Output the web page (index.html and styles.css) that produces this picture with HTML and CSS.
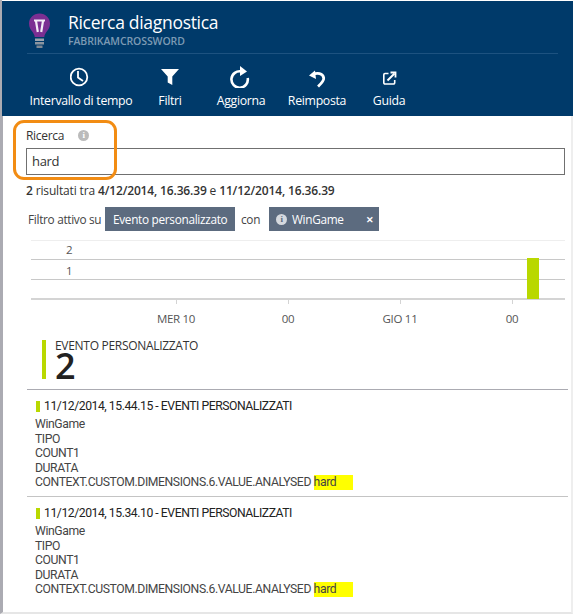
FILE: index.html
```html
<!DOCTYPE html>
<html lang="en">
<head>
  <meta charset="UTF-8">
  <meta name="viewport" content="width=device-width, initial-scale=1.0">
  <title>Ricerca diagnostica</title>
  <link rel="stylesheet" href="styles.css">
</head>
<body>
  <div class="blade">
    <div class="blade-header">
      <div class="title-row">
        <svg class="bulb" width="24" height="36" viewBox="0 0 24 36">
          <path d="M11.500 .5C5.500 .5 1 5 1 10.500c0 3.500 1.500 5.800 3 7.800 1.300 1.700 2.500 3.500 2.700 5.700h9.600c.2-2.200 1.400-4 2.700-5.700 1.500-2 3-4.300 3-7.800C22 5 17.500 .5 11.500 .5z" fill="#7b2f92"/>
          <path d="M6 7.500h11M8 8l1.800 11M15 8l-1.800 11" stroke="#f3ecf6" stroke-width="2.200" fill="none"/>
          <rect x="7" y="25.500" width="9" height="2.500" fill="#9aa3ad"/>
          <rect x="7" y="29" width="9" height="2.500" fill="#8c95a0"/>
          <rect x="8.500" y="32.500" width="6" height="2.500" fill="#7f8894"/>
        </svg>
        <div>
          <div class="blade-title">Ricerca diagnostica</div>
          <div class="blade-subtitle">FABRIKAMCROSSWORD</div>
        </div>
      </div>
      <div class="toolbar">
        <div class="tool">
          <svg width="22" height="22" viewBox="0 0 22 22" fill="none" stroke="#fff">
            <circle cx="9" cy="11" r="8.300" stroke-width="1.800"/>
            <path d="M8 5v6.500l5 3.500" stroke-width="1.800"/>
          </svg>
          <span>Intervallo di tempo</span>
        </div>
        <div class="tool">
          <svg width="22" height="22" viewBox="0 0 22 22">
            <path d="M2 3h18l-6.700 7.500V19l-4.600-2.500v-6z" fill="#fff"/>
          </svg>
          <span>Filtri</span>
        </div>
        <div class="tool">
          <svg width="22" height="22" viewBox="0 0 22 22" fill="none">
            <path d="M11.500 5.500A8.200 8.200 0 1 0 17.700 12" stroke="#fff" stroke-width="2.600"/>
            <path d="M10 0l7 5.500-7 4.500z" fill="#fff"/>
          </svg>
          <span>Aggiorna</span>
        </div>
        <div class="tool">
          <svg width="22" height="22" viewBox="0 0 22 22" fill="none">
            <path d="M7 8.500c4-2 10-1.500 10.700 3.500 .4 3-3 6-5.700 8.500" stroke="#fff" stroke-width="2.800"/>
            <path d="M9 4.500l-6 5 7 3.500z" fill="#fff"/>
          </svg>
          <span>Reimposta</span>
        </div>
        <div class="tool">
          <svg width="22" height="22" viewBox="0 0 22 22" fill="none" stroke="#fff" stroke-width="1.600">
            <path d="M10.500 7.500H7A1.200 1.200 0 0 0 5.800 8.700v8.100A1.200 1.200 0 0 0 7 18h8.500a1.200 1.200 0 0 0 1.200-1.200V14"/>
            <path d="M9.500 14.500l7-7" stroke-width="2"/>
            <path d="M12.500 6.500h5v5" stroke-width="1.800"/>
          </svg>
          <span>Guida</span>
        </div>
      </div>
    </div>

    <div class="search">
      <div class="search-label">Ricerca <span class="info info-light">i</span></div>
      <div class="search-input">hard</div>
      <div class="search-callout"></div>
    </div>

    <p class="summary"><b>2</b> risultati tra <b>4/12/2014, 16.36.39</b> e <b>11/12/2014, 16.36.39</b></p>

    <div class="filters">
      <span>Filtro attivo su</span>
      <span class="chip chip-type">Evento personalizzato</span>
      <span class="filter-con">con</span>
      <span class="chip chip-name"><span class="info info-chip">i</span> WinGame <span class="chip-close">&#10005;</span></span>
    </div>

    <div class="chart">
      <div class="chart-row"><span>2</span></div>
      <div class="chart-row"><span>1</span></div>
      <div class="chart-row"></div>
      <div class="chart-bar"></div>
      <div class="chart-axis">
        <span>MER 10</span>
        <span>00</span>
        <span>GIO 11</span>
        <span>00</span>
      </div>
    </div>

    <div class="total">
      <div class="total-mark"></div>
      <div>
        <div class="total-label">EVENTO PERSONALIZZATO</div>
        <div class="total-value">2</div>
      </div>
    </div>

    <div class="result">
      <div class="result-title"><i class="result-mark"></i>11/12/2014, 15.44.15 - EVENTI PERSONALIZZATI</div>
      <div class="result-line">WinGame</div>
      <div class="result-line">TIPO</div>
      <div class="result-line">COUNT1</div>
      <div class="result-line">DURATA</div>
      <div class="result-line">CONTEXT.CUSTOM.DIMENSIONS.6.VALUE.ANALYSED <mark>hard</mark></div>
    </div>
    <div class="result">
      <div class="result-title"><i class="result-mark"></i>11/12/2014, 15.34.10 - EVENTI PERSONALIZZATI</div>
      <div class="result-line">WinGame</div>
      <div class="result-line">TIPO</div>
      <div class="result-line">COUNT1</div>
      <div class="result-line">DURATA</div>
      <div class="result-line">CONTEXT.CUSTOM.DIMENSIONS.6.VALUE.ANALYSED <mark>hard</mark></div>
    </div>
  </div>
</body>
</html>
```

FILE: styles.css
```css
html, body {
  margin: 0;
  padding: 0;
  background-color: #fff;
}
body {
  font-family: "Open Sans", Roboto, sans-serif;
  font-size: 12px;
  letter-spacing: -0.3px;
  color: #444;
}
.blade {
  box-sizing: border-box;
  width: 573px;
  height: 614px;
  border-left: 3px solid #ababb2;
  border-right: 2px solid #eee;
  border-bottom: 2px solid #e6e6e6;
}
.blade-header {
  height: 115px;
  margin: 0 -2px 0 -1px;
  border-top: 1px solid #fff;
  background-color: #003a6a;
  background-clip: padding-box;
  color: white;
}
.title-row {
  display: flex;
  gap: 16px;
  height: 53px;
  margin: 0 15px 0 25px;
  box-sizing: border-box;
  padding: 12px 0 0 1px;
  border-bottom: 1px solid #1d5280;
}
.bulb {
  flex: none;
}
.blade-title {
  font-size: 17.500px;
  line-height: 21px;
  margin-top: -1px;
}
.blade-subtitle {
  font-size: 10.500px;
  font-weight: 600;
  line-height: 17px;
  letter-spacing: -0.1px;
  color: #7d9ab4;
}
.toolbar {
  display: grid;
  grid-template-columns: 112px 66px 76px 76px 68px;
  padding: 12px 0 0 23px;
}
.tool {
  display: flex;
  flex-direction: column;
  align-items: center;
  gap: 5px;
  font-size: 12.300px;
  font-weight: 500;
  line-height: 16px;
  white-space: nowrap;
}
.search {
  position: relative;
  padding: 11px 6px 0 23px;
}
.search-label {
  display: flex;
  align-items: center;
  gap: 14px;
  height: 16px;
  color: #333;
}
.info {
  display: inline-block;
  width: 11px;
  height: 11px;
  border-radius: 50%;
  font: bold 9px/11px "Liberation Serif", serif;
  text-align: center;
}
.info-light {
  background-color: #bbb;
  color: #fff;
}
.search-input {
  box-sizing: border-box;
  height: 27px;
  margin-top: 5px;
  padding-left: 5px;
  border: 1px solid #707070;
  font-size: 13px;
  line-height: 24px;
  color: #333;
}
.search-callout {
  position: absolute;
  left: 10px;
  top: 4px;
  width: 104px;
  height: 60px;
  box-sizing: border-box;
  border: 3px solid #f28c13;
  border-radius: 11px;
}
.summary {
  margin: 8px 0 0 23px;
  line-height: 16px;
  letter-spacing: -0.15px;
  color: #333;
}
.summary b {
  font-weight: 600;
}
.filters {
  display: grid;
  grid-template-columns: 77px 130px 34px 110px;
  align-items: center;
  height: 24px;
  margin: 8px 0 0 25px;
  white-space: nowrap;
  font-size: 11.800px;
}
.filter-con {
  padding-left: 6px;
}
.chip {
  display: flex;
  align-items: center;
  box-sizing: border-box;
  height: 24px;
  background-color: #5c6b7f;
  color: #fff;
}
.chip-type {
  padding-left: 8px;
}
.chip-name {
  padding-left: 7px;
  gap: 5px;
}
.info-chip {
  background-color: #d5d9de;
  color: #5c6b7f;
}
.chip-close {
  margin-left: auto;
  margin-right: 5px;
  font-size: 9px;
  font-weight: 700;
}
.chart {
  position: relative;
  margin: 9px 6px 0 28px;
  border-top: 1px solid #eee;
}
.chart-row {
  box-sizing: border-box;
  height: 19px;
  padding-left: 35px;
  border-bottom: 1px solid #c8c8c8;
  font-size: 11.500px;
  line-height: 18px;
  color: #555;
}
.chart-row:nth-child(2) {
  height: 20px;
  padding-top: 1px;
  line-height: 20px;
}
.chart-row:nth-child(3) {
  height: 20px;
  border-bottom: 2px solid #d4d4d4;
}
.chart-bar {
  position: absolute;
  left: 496px;
  top: 17px;
  width: 12px;
  height: 41px;
  background-color: #b9d800;
}
.chart-axis {
  display: grid;
  grid-template-columns: repeat(4, 112px);
  margin-left: 89px;
  text-align: center;
  font-size: 11.500px;
  line-height: 16px;
  height: 33px;
  padding-top: 11px;
  box-sizing: border-box;
  color: #555;
}
.chart-axis span {
  position: relative;
}
.chart-axis span::before {
  content: "";
  position: absolute;
  left: 50%;
  top: -11px;
  height: 4px;
  border-left: 1px solid #d4d4d4;
}
.total {
  display: flex;
  gap: 9px;
  margin: 7px 5px 0 39px;
  height: 49px;
}
.total-mark {
  width: 4px;
  height: 39px;
  background-color: #b9d800;
}
.total-label {
  line-height: 12px;
  color: #333;
}
.total-value {
  font-size: 36px;
  font-weight: 600;
  line-height: 28px;
  letter-spacing: 0;
  color: #222;
}
.result {
  margin: 0 3px 0 24px;
  padding: 8px 0 0 8px;
  height: 107px;
  box-sizing: border-box;
  border-top: 1px solid #ababb2;
  font-family: Roboto, "Open Sans", sans-serif;
  font-size: 12.200px;
  letter-spacing: -0.4px;
}
.result + .result {
  border-top-color: #c4c4c4;
}
.result-title {
  display: flex;
  align-items: center;
  gap: 4px;
  margin-left: 1px;
  line-height: 16px;
  letter-spacing: -0.45px;
  color: #222;
}
.result-mark {
  width: 4px;
  height: 11px;
  background-color: #b9d800;
}
.result-line {
  line-height: 14.500px;
  color: #444;
}
.result-title + .result-line {
  margin-top: 3px;
}
mark {
  display: inline-block;
  width: 39px;
  background-color: #ffff00;
  color: #444;
}
```
